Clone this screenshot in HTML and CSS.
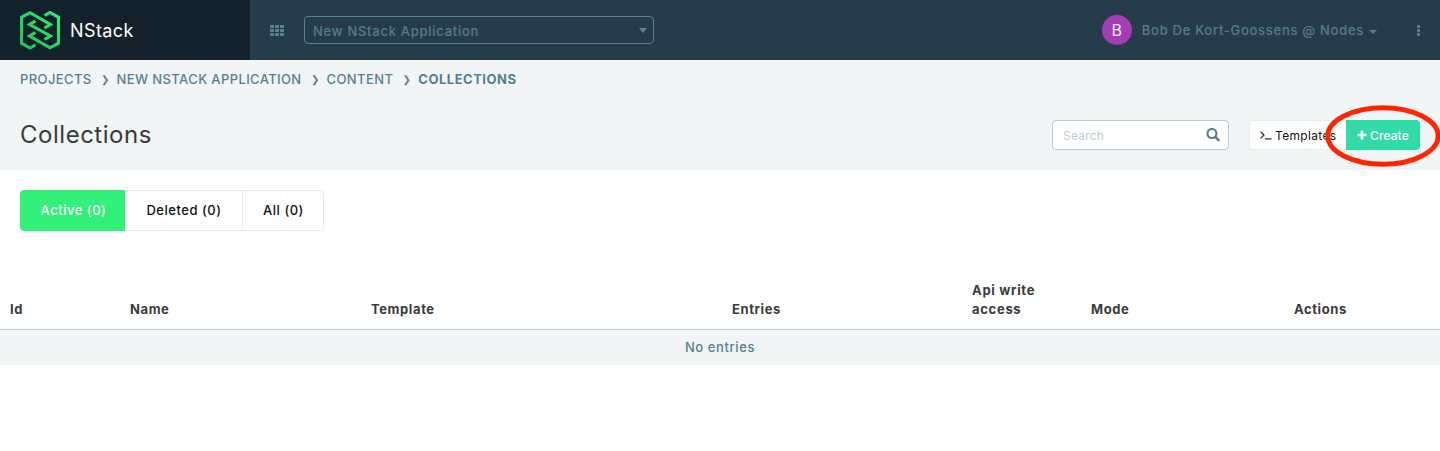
FILE: index.html
```html
<!DOCTYPE html>
<html lang="en">
<head>
<meta charset="utf-8">
<title>NStack - Collections</title>
<link rel="stylesheet" href="styles.css">
</head>
<body>
<header class="topbar">
  <a class="brand">
    <svg class="logo" width="40" height="40" viewBox="0 0 40 40">
      <defs><linearGradient id="lg" gradientUnits="userSpaceOnUse" x1="40" y1="0" x2="0" y2="40"><stop offset="0" stop-color="#33ee78"/><stop offset="1" stop-color="#18c552"/></linearGradient></defs>
      <g fill="none" stroke="url(#lg)" stroke-width="3.1">
        <path d="M15.5 35 10 38 1.5 33.2V7.3L10 2.7 30.5 14.5 24.5 18"/>
        <path d="M24.5 5.5 30 2.5 38.5 7.3V33.2L30 37.8 9.5 26 15.5 22.5"/>
        <path d="M15.5 11 9.5 14.5 30.5 26 24.5 29.5"/>
      </g>
    </svg>
    <span class="brand-name">NStack</span>
  </a>
  <svg class="grid-icon" width="14" height="11" viewBox="0 0 14 11" fill="#5a8290">
    <rect width="4" height="3" rx=".4"/><rect x="5" width="4" height="3" rx=".4"/><rect x="10" width="4" height="3" rx=".4"/>
    <rect y="4" width="4" height="3" rx=".4"/><rect x="5" y="4" width="4" height="3" rx=".4"/><rect x="10" y="4" width="4" height="3" rx=".4"/>
    <rect y="8" width="4" height="3" rx=".4"/><rect x="5" y="8" width="4" height="3" rx=".4"/><rect x="10" y="8" width="4" height="3" rx=".4"/>
  </svg>
  <div class="app-select"><span class="app-name">New NStack Application</span><i class="select-caret"></i></div>
  <div class="account">
    <span class="avatar">B</span>
    <span class="user">Bob De Kort-Goossens @ Nodes</span>
    <i class="user-caret"></i>
    <svg class="dots" width="3" height="11" viewBox="0 0 3 11" fill="#5a8290"><rect width="3" height="3" rx=".4"/><rect y="4" width="3" height="3" rx=".4"/><rect y="8" width="3" height="3" rx=".4"/></svg>
  </div>
</header>
<section class="page-head">
  <nav class="crumbs">
    <a class="c1">PROJECTS</a><span class="sep">❯</span><a class="c2">NEW NSTACK APPLICATION</a><span class="sep">❯</span><a class="c3">CONTENT</a><b class="sep">❯</b><strong class="c4">COLLECTIONS</strong>
  </nav>
  <div class="title-row">
    <h1 class="title">Collections</h1>
    <div class="search">
      <span class="placeholder">Search</span>
      <svg width="14" height="14" viewBox="0 0 14 14" fill="none" stroke="#567f8f"><circle cx="5.9" cy="5.5" r="4.5" stroke-width="2.1"/><path d="M9.2 8.8l3.4 3.4" stroke-width="2.6" stroke-linecap="round"/></svg>
    </div>
    <div class="actions">
      <a class="btn templates">
        <svg width="12" height="10" viewBox="0 0 12 10" fill="none" stroke="#222"><path d="M.6 1.6 4 5 .6 8.4" stroke-width="1.2"/><path d="M5 8.9h6.5" stroke-width="1.2"/></svg>
        <span class="t-label">Templates</span>
      </a>
      <a class="btn create">
        <svg width="10" height="10" viewBox="0 0 10 10"><path d="M5 .5v9M.5 5h9" stroke="#fff" stroke-width="2.6"/></svg>
        <span class="c-label">Create</span>
      </a>
      <svg class="highlight" width="118" height="64" viewBox="0 0 118 64"><ellipse cx="59" cy="32" rx="55.2" ry="28.2" fill="none" stroke="#ff2600" stroke-width="5"/></svg>
    </div>
  </div>
</section>
<main>
  <div class="tabs"><a class="tab active"><span>Active (0)</span></a><a class="tab deleted"><span>Deleted (0)</span></a><a class="tab all"><span>All (0)</span></a></div>
  <table class="listing">
    <colgroup><col class="w-id"><col class="w-name"><col class="w-template"><col class="w-entries"><col class="w-api"><col class="w-mode"><col></colgroup>
    <thead><tr><th>Id</th><th>Name</th><th>Template</th><th>Entries</th><th class="th-api">Api write<br>access</th><th>Mode</th><th>Actions</th></tr></thead>
    <tbody><tr><td colspan="7">No entries</td></tr></tbody>
  </table>
</main>
</body>
</html>
```
FILE: styles.css
```css
* { box-sizing: border-box; }
body { margin: 0; background: #fff; color: #3b3b3b; font-family: "Inter", "Liberation Sans", sans-serif; font-size: 13px; overflow: hidden; }
a, span, strong { white-space: nowrap; }
.topbar { display: flex; align-items: center; height: 60px; background: #273c4a; color: #567c8a; }
.brand { display: flex; align-items: center; width: 250px; height: 60px; padding-left: 20px; background: #15212a; color: #fff; }
.brand-name { margin: 0 0 0 10px; font-size: 18px; letter-spacing: .4px; }
.grid-icon { margin-left: 20px; }
.app-select { display: flex; align-items: center; justify-content: space-between; width: 350px; height: 28px; margin-left: 20px; padding: 2px 6px 0 8px; border: 1px solid #567f8f; border-radius: 4px; }
.app-name { font-weight: 500; letter-spacing: .73px; }
.select-caret { border: 4px solid transparent; border-top: 5px solid #567f8f; border-bottom: 0; margin-top: -2px; }
.account { display: flex; align-items: center; margin-left: auto; padding-right: 20px; }
.avatar { width: 30px; height: 30px; border-radius: 50%; background: #a23db3; color: #f4e4f6; font-size: 16px; line-height: 30px; text-align: center; }
.user { margin-left: 10px; font-weight: 500; letter-spacing: .72px; }
.user-caret { margin: 3px 0 0 5px; border: 4px solid transparent; border-top-color: #567f8f; border-bottom: 0; }
.dots { margin-left: 40px; }
.page-head { height: 110px; padding: 0 20px; background: #f1f5f6; }
.crumbs { display: flex; align-items: center; height: 39px; padding-bottom: 1px; color: #567f8f; }
.crumbs a { letter-spacing: .39px; font-weight: 500; }
.crumbs .c4 { letter-spacing: .5px; }
.sep { width: 25px; padding: 2px 0 0 2px; text-align: center; font-family: "DejaVu Sans", sans-serif; font-size: 10px; line-height: 20px; }
.title-row { display: flex; align-items: center; height: 72px; }
.title { margin: 0 auto 0 0; font-size: 24px; font-weight: 400; line-height: 30px; letter-spacing: .52px; }
.search { display: flex; align-items: center; justify-content: space-between; width: 177px; height: 30px; padding: 0 8px 0 10px; background: #fff; border: 1px solid #b7cad1; border-radius: 4px; }
.placeholder { color: #bccdd4; font-size: 12px; letter-spacing: .2px; }
.actions { position: relative; display: flex; margin-left: 20px; }
.btn { display: flex; align-items: center; height: 30px; font-size: 12px; }
.templates { width: 97px; padding-left: 10px; gap: 3px; background: #fff; border: 1px solid #e6edf0; border-right: 0; border-radius: 4px 0 0 4px; color: #111; letter-spacing: .33px; }
.create { width: 74px; padding-left: 11px; gap: 3px; background: #31dba6; color: #fff; border-radius: 0 4px 4px 0; font-weight: 500; letter-spacing: .1px; }
.highlight { position: absolute; right: -22px; top: -16px; }
.tabs { display: flex; margin: 20px 0 0 20px; height: 41px; }
.tab { display: flex; align-items: center; justify-content: center; border: 1px solid #e4ecf0; padding: 0 0 2px 1px; color: #111; font-weight: 500; letter-spacing: .52px; }
.tab.active { width: 105px; padding-left: 2px; background: #32f078; border-color: #32f078; color: #fff; border-radius: 4px 0 0 4px; }
.deleted { width: 118px; border-left: 0; }
.all { width: 81px; border-left: 0; border-radius: 0 4px 4px 0; }
.listing { width: 100%; margin-top: 40px; table-layout: fixed; border-collapse: collapse; }
.w-id { width: 120px; } .w-name { width: 241px; } .w-template { width: 361px; } .w-entries { width: 240px; } .w-api { width: 119px; } .w-mode { width: 203px; }
.listing th { height: 58px; padding: 0 10px 10px; text-align: left; vertical-align: bottom; font-weight: 700; line-height: 19px; letter-spacing: .6px; border-bottom: 1px solid #b9cbd0; }
.listing .th-api { letter-spacing: .7px; }
.listing td { height: 36px; padding: 0 0 1px; text-align: center; color: #567f8f; background: #f1f5f6; font-weight: 500; letter-spacing: .6px; }
```
